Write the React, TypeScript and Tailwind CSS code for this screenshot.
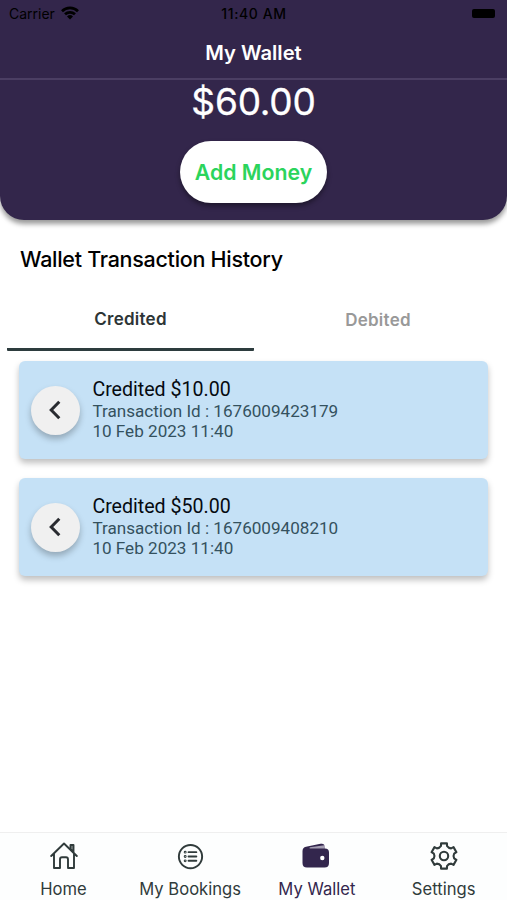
import { IoListCircleOutline } from "react-icons/io5";
import type { ReactNode } from "react";

function Transaction({ amount, id }: { amount: string; id: string }) {
  return (
    <div className="flex h-[98px] items-center rounded-[6px] bg-[#c5e1f6] pl-[12px] shadow-[0_4px_6px_rgba(0,0,0,0.25)]">
      <div className="flex size-[49px] items-center justify-center rounded-full bg-[#f0f0f0] shadow-[0_4px_6px_rgba(0,0,0,0.25)]">
        <svg className="-ml-px" width="14" height="20" viewBox="0 0 14 20" fill="none" stroke="#292b30" strokeWidth="3">
          <path d="M11.3 1.8 3.2 10l8.1 8.2" />
        </svg>
      </div>
      <div className="ml-[12px] pb-px font-['Roboto',sans-serif] whitespace-nowrap">
        <div className="text-[19.6px] leading-[22px] text-[#050a10]">Credited {amount}</div>
        <div className="text-[17.1px] leading-[20px] text-[#34515e]">Transaction Id : {id}</div>
        <div className="text-[17.1px] leading-[20px] text-[#34515e]">10 Feb 2023 11:40</div>
      </div>
    </div>
  );
}

function polar(radius: number, degrees: number) {
  const a = (degrees * Math.PI) / 180;
  return `${(14 + radius * Math.sin(a)).toFixed(2)} ${(14 - radius * Math.cos(a)).toFixed(2)}`;
}

const gearPath =
  [0, 60, 120, 180, 240, 300]
    .map((t, i) => `${i === 0 ? "M" : "L"}${polar(13, t - 13)}L${polar(13, t + 13)}L${polar(10.4, t + 17)}Q${polar(8.9, t + 30)} ${polar(10.4, t + 43)}`)
    .join("") + "Z";

function Gear() {
  return (
    <svg width="28" height="28" viewBox="0 0 28 28" fill="none" stroke="currentColor" strokeWidth="2.1" strokeLinejoin="round">
      <path d={gearPath} />
      <circle cx="14" cy="14" r="4.2" />
    </svg>
  );
}

function NavItem({ label, active, children }: { label: string; active?: boolean; children: ReactNode }) {
  return (
    <div className={`flex flex-1 flex-col items-center pt-[8px] ${active ? "text-[#33264d]" : "text-[#303b3b]"}`}>
      <div className="flex h-[30px] items-center">{children}</div>
      <div className="mt-[7px] text-[16.6px] leading-[22px] whitespace-nowrap">{label}</div>
    </div>
  );
}

export default function App() {
  return (
    <div className="flex h-[900px] w-full flex-col overflow-hidden bg-white font-['Inter',sans-serif]">
      <header className="flex h-[220px] shrink-0 flex-col rounded-b-[24px] bg-[#33264b] shadow-[0_4px_5px_rgba(0,0,0,0.4)]">
        <div className="mb-[2px] grid h-[26px] grid-cols-3 items-center px-[9px] text-[14px] text-black">
          <div className="flex items-center gap-[6px]">
            <span>Carrier</span>
            <svg width="18" height="14" viewBox="0 0 18 14" fill="none" stroke="black" strokeWidth="2.7">
              <path d="M1 5.2a11.5 11.5 0 0 1 16 0M4 8.3a7.2 7.2 0 0 1 10 0" />
              <path d="m9 13.5-3-3a4.4 4.4 0 0 1 6 0Z" fill="black" stroke="none" />
            </svg>
          </div>
          <div className="pl-px text-center font-medium tracking-[0.6px]">11:40 AM</div>
          <div className="mr-[3px] h-[9px] w-[23px] justify-self-end rounded-[2px] bg-black" />
        </div>
        <h1 className="flex h-[52px] items-center justify-center border-b-2 border-[#4b3e63] text-[20.2px] font-semibold text-white">My Wallet</h1>
        <div className="mt-[2px] text-center text-[37px] leading-[40px] tracking-[-0.2px] text-white [-webkit-text-stroke:0.3px_white]">$60.00</div>
        <button className="mt-[19px] h-[62px] w-[147px] self-center rounded-full bg-white pt-[2px] text-[21.3px] font-semibold whitespace-nowrap text-[#2bd45c] shadow-[0_3px_5px_rgba(0,0,0,0.4)]">Add Money</button>
      </header>
      <main className="flex-1">
        <h2 className="mt-[24px] ml-[20px] text-[21.5px] leading-[30px] font-medium tracking-[-0.28px] text-black">Wallet Transaction History</h2>
        <div className="mt-[15px] flex h-[62px] px-[7px] text-[17px] font-semibold tracking-[0.25px]">
          <div className="flex h-[62px] w-[247px] items-center justify-center rounded-[1px] border-b-[3px] border-[#2d3c3e] pt-[3px] text-[#2d3536]">Credited</div>
          <div className="flex h-[62px] flex-1 items-center justify-center pt-[2px] pl-[2px] text-[#999]">Debited</div>
        </div>
        <div className="mr-[18.6px] ml-[19.4px] mt-[10px] flex flex-col gap-[19px]">
          <Transaction amount="$10.00" id="1676009423179" />
          <Transaction amount="$50.00" id="1676009408210" />
        </div>
      </main>
      <nav className="flex h-[68px] shrink-0 border-t border-[#efefef] bg-[#fdfefe]">
        <NavItem label="Home">
          <svg className="ml-px" width="28" height="28" viewBox="0 0 28 28" fill="none" stroke="currentColor" strokeWidth="1.9" strokeLinejoin="round" strokeLinecap="round">
            <path d="m1.2 14 12.8-12.5L26.8 14M4 11.5V26h6v-8.5c0-1.5.8-2.2 2-2.2h4c1.2 0 2 .7 2 2.2V26h6V11.5" />
            <path d="M20.5 7V3h3v7Z" fill="currentColor" fillOpacity="0.5" />
          </svg>
        </NavItem>
        <NavItem label="My Bookings"><IoListCircleOutline size={31} /></NavItem>
        <NavItem label="My Wallet" active>
          <svg className="mr-[3px] -mt-px" width="27" height="25" viewBox="0 0 27 25" fill="currentColor">
            <path d="M7 4.2 19 1Q22.5.2 23 4v2H7Z" fill="#a59eb3" />
            <path d="M.5 8Q.5 4.4 4 3.7L18.5.8Q21.5.2 22.3 2.2L8 4.3Q6.5 5.4 8 5.5H23Q27 5.5 27 9.5V20q0 4.5-4.5 4.5H5Q.5 24.5.5 20Z" />
            <circle cx="20.3" cy="15" r="2.2" fill="white" />
          </svg>
        </NavItem>
        <NavItem label="Settings"><Gear /></NavItem>
      </nav>
    </div>
  );
}
